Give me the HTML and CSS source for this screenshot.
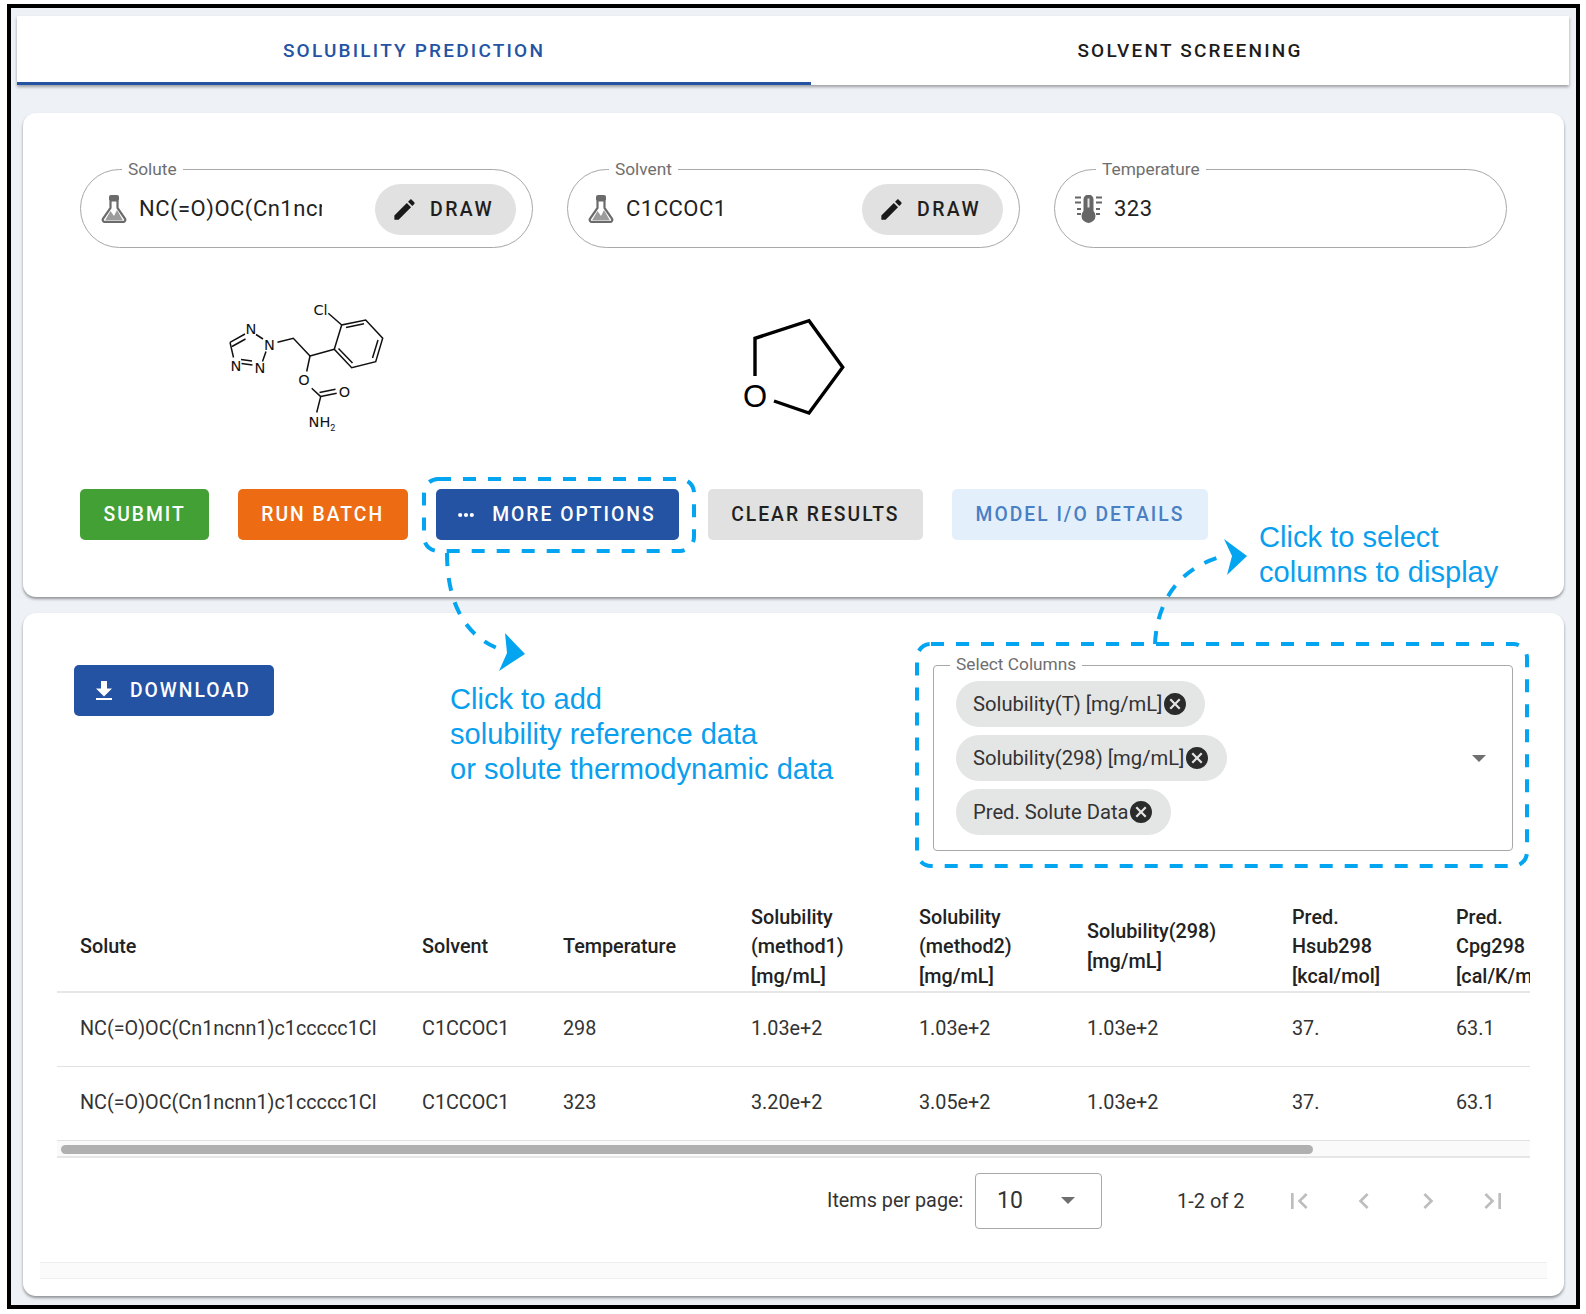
FILE: index.html
```html
<!DOCTYPE html>
<html lang="en">
<head>
    <meta charset="UTF-8">
    <meta name="viewport" content="width=device-width, initial-scale=1.0">
    <title>Solubility Prediction</title>
    <link rel="stylesheet" href="styles.css">
</head>
<body>
    <div class="frame">
        <div class="tabs">
            <div class="tab tab-active">SOLUBILITY PREDICTION</div>
            <div class="tab tab-rest">SOLVENT SCREENING</div>
        </div>

        <div class="card card-input">
            <div class="field-row">
                <div class="field">
                    <span class="field-label">Solute</span>
                    <svg class="field-icon" viewBox="0 0 26 28"><path class="flask-liquid" d="M4 25.500 9.500 16l3.500 5 3-6 6 10.500z"/><path class="flask-glass" d="M9.500 6v7L1.800 24a2.300 2.300 0 0 0 1.900 3h18.600a2.300 2.300 0 0 0 1.900-3L16.500 13V6"/><rect class="flask-cap" x="8" y="0" width="10" height="6.500" rx="2"/></svg>
                    <span class="field-value">NC(=O)OC(Cn1ncn</span>
                    <button class="btn-draw"><svg class="draw-icon" viewBox="0 0 24 24"><path d="M3 17.250V21h3.750L17.810 9.940l-3.750-3.750L3 17.250zM20.710 7.040c.39-.39.39-1.020 0-1.410l-2.340-2.340c-.39-.39-1.020-.39-1.410 0l-1.830 1.830 3.750 3.750 1.830-1.830z"/></svg>DRAW</button>
                </div>
                <div class="field">
                    <span class="field-label">Solvent</span>
                    <svg class="field-icon" viewBox="0 0 26 28"><path class="flask-liquid" d="M4 25.500 9.500 16l3.500 5 3-6 6 10.500z"/><path class="flask-glass" d="M9.500 6v7L1.800 24a2.300 2.300 0 0 0 1.900 3h18.600a2.300 2.300 0 0 0 1.900-3L16.500 13V6"/><rect class="flask-cap" x="8" y="0" width="10" height="6.500" rx="2"/></svg>
                    <span class="field-value">C1CCOC1</span>
                    <button class="btn-draw"><svg class="draw-icon" viewBox="0 0 24 24"><path d="M3 17.250V21h3.750L17.810 9.940l-3.750-3.750L3 17.250zM20.710 7.040c.39-.39.39-1.020 0-1.410l-2.340-2.340c-.39-.39-1.020-.39-1.410 0l-1.830 1.830 3.750 3.750 1.830-1.830z"/></svg>DRAW</button>
                </div>
                <div class="field">
                    <span class="field-label">Temperature</span>
                    <svg class="temp-icon" viewBox="0 0 27 28">
                        <path d="M8.500 16V4.500a5 5 0 0 1 10 0V16a7 7 0 1 1-10 0z"/>
                        <rect class="temp-slit" x="12.500" y="3.500" width="2" height="9"/>
                        <path d="M0 1.500h6v2H0zM0 6.500h6v2H0zM2 13h4v2H2zM2 18h4v2H2zM21 1.500h6v2h-6zM21 6.500h6v2h-6zM21 13h4v2h-4zM21 18h4v2h-4z"/>
                    </svg>
                    <span class="field-value">323</span>
                </div>
            </div>

            <div class="molecules">
                <svg class="mol-solute" viewBox="0 0 260 170">
                    <g class="mol-bonds">
                        <path d="M30 62.300 45 54M32 66.500 45.500 59M56 54.500l7 4.500M66 71.500 62.500 81.500M52.500 85l-11-1.500M52 81l-11-1.500M33.500 77.500 30 62.300"/>
                        <path d="M77.500 62.300 93.300 58.300 110 76M110 76l24.300-6.700M110 76 106.700 91.500M111.700 108.300l9 8.300M120.700 116.600l16-3.300M119.500 112.500l16-3.300M120.700 116.600 116.700 132.500"/>
                        <path d="M134.300 69.300 141.700 45 165.700 40 182.700 58.300 175.700 81.700 151.700 87.700zM146 47.500l18-3.700M178 60l-5.500 18M152.500 83l-14-14.500M141.700 45 128.300 33.300"/>
                    </g>
                    <text class="mol-atom" x="51" y="54">N</text>
                    <text class="mol-atom" x="69.500" y="69.500">N</text>
                    <text class="mol-atom" x="60" y="92.500">N</text>
                    <text class="mol-atom" x="36" y="90.500">N</text>
                    <text class="mol-atom" x="104" y="105">O</text>
                    <text class="mol-atom" x="144.500" y="117">O</text>
                    <text class="mol-atom" x="120.500" y="34.500">Cl</text>
                    <text class="mol-atom" x="122" y="146.500">NH<tspan class="mol-sub" dy="4">2</tspan></text>
                </svg>
                <svg class="mol-solvent" viewBox="0 0 200 150">
                    <path d="M55 86V48.300L109 30.700 142.700 77.300 109 123 74 111"/>
                    <text x="55" y="117">O</text>
                </svg>
            </div>

            <div class="btn-row">
                <button class="btn btn-green">SUBMIT</button>
                <button class="btn btn-orange">RUN BATCH</button>
                <button class="btn btn-blue btn-more"><svg class="more-icon" viewBox="0 0 24 24"><circle cx="5" cy="12" r="2.500"/><circle cx="12" cy="12" r="2.500"/><circle cx="19" cy="12" r="2.500"/></svg>MORE OPTIONS</button>
                <button class="btn btn-grey">CLEAR RESULTS</button>
                <button class="btn btn-light">MODEL I/O DETAILS</button>
            </div>
        </div>

        <div class="card card-results">
            <div class="results">
                <div class="results-top">
                    <button class="btn btn-blue btn-download"><svg class="download-icon" viewBox="0 0 16 19"><path d="M16 7.500h-5V0H5v7.500H0l8 8zM0 17h16v2H0z"/></svg>DOWNLOAD</button>
                    <div class="select-box">
                        <span class="field-label select-label">Select Columns</span>
                        <div class="chips">
                            <div class="chip">Solubility(T) [mg/mL]<svg class="chip-close" viewBox="2 2 20 20"><path d="M12 2C6.470 2 2 6.470 2 12s4.470 10 10 10 10-4.470 10-10S17.530 2 12 2zm5 13.590L15.590 17 12 13.410 8.410 17 7 15.590 10.590 12 7 8.410 8.410 7 12 10.590 15.590 7 17 8.410 13.410 12 17 15.590z"/></svg></div>
                            <div class="chip">Solubility(298) [mg/mL]<svg class="chip-close" viewBox="2 2 20 20"><path d="M12 2C6.470 2 2 6.470 2 12s4.470 10 10 10 10-4.470 10-10S17.530 2 12 2zm5 13.590L15.590 17 12 13.410 8.410 17 7 15.590 10.590 12 7 8.410 8.410 7 12 10.590 15.590 7 17 8.410 13.410 12 17 15.590z"/></svg></div>
                            <div class="chip">Pred. Solute Data<svg class="chip-close" viewBox="2 2 20 20"><path d="M12 2C6.470 2 2 6.470 2 12s4.470 10 10 10 10-4.470 10-10S17.530 2 12 2zm5 13.590L15.590 17 12 13.410 8.410 17 7 15.590 10.590 12 7 8.410 8.410 7 12 10.590 15.590 7 17 8.410 13.410 12 17 15.590z"/></svg></div>
                        </div>
                        <span class="caret caret-select"></span>
                    </div>
                </div>

                <div class="table-wrap">
                    <table class="data-table">
                        <colgroup>
                            <col class="col-solute">
                            <col class="col-solvent">
                            <col class="col-temp">
                            <col class="col-sol">
                            <col class="col-sol">
                            <col class="col-sol298">
                            <col class="col-hsub">
                            <col class="col-cpg">
                        </colgroup>
                        <thead>
                            <tr>
                                <th>Solute</th>
                                <th>Solvent</th>
                                <th>Temperature</th>
                                <th>Solubility<br>(method1)<br>[mg/mL]</th>
                                <th>Solubility<br>(method2)<br>[mg/mL]</th>
                                <th>Solubility(298)<br>[mg/mL]</th>
                                <th>Pred.<br>Hsub298<br>[kcal/mol]</th>
                                <th>Pred.<br>Cpg298<br>[cal/K/mol]</th>
                            </tr>
                        </thead>
                        <tbody>
                            <tr>
                                <td>NC(=O)OC(Cn1ncnn1)c1ccccc1Cl</td>
                                <td>C1CCOC1</td>
                                <td>298</td>
                                <td>1.03e+2</td>
                                <td>1.03e+2</td>
                                <td>1.03e+2</td>
                                <td>37.</td>
                                <td>63.1</td>
                            </tr>
                            <tr>
                                <td>NC(=O)OC(Cn1ncnn1)c1ccccc1Cl</td>
                                <td>C1CCOC1</td>
                                <td>323</td>
                                <td>3.20e+2</td>
                                <td>3.05e+2</td>
                                <td>1.03e+2</td>
                                <td>37.</td>
                                <td>63.1</td>
                            </tr>
                        </tbody>
                    </table>
                </div>
                <div class="scroll-track"><div class="scroll-thumb"></div></div>

                <div class="pager">
                    <span class="pager-label">Items per page:</span>
                    <div class="pager-select">10<span class="caret"></span></div>
                    <span class="pager-range">1-2 of 2</span>
                    <svg class="pager-icon" viewBox="0 0 24 24"><path d="M18.410 16.590 13.820 12l4.590-4.590L17 6l-6 6 6 6zM6 6h2v12H6z"/></svg>
                    <svg class="pager-icon" viewBox="0 0 24 24"><path d="M15.410 7.410 14 6l-6 6 6 6 1.410-1.410L10.830 12z"/></svg>
                    <svg class="pager-icon" viewBox="0 0 24 24"><path d="M10 6 8.590 7.410 13.170 12l-4.580 4.590L10 18l6-6z"/></svg>
                    <svg class="pager-icon" viewBox="0 0 24 24"><path d="M5.590 7.410 10.180 12l-4.590 4.590L7 18l6-6-6-6zM16 6h2v12h-2z"/></svg>
                </div>
            </div>
            <div class="bottom-bar"></div>
        </div>
    </div>

    <!-- callouts drawn over the page -->
    <svg class="callouts" viewBox="0 0 1586 1314">
        <rect x="424" y="479" width="270" height="72" rx="14"/>
        <path d="M447 553C447 600 463 634 497 648"/>
        <path class="callout-head" d="M505 633 525 654 499 671 507 653z"/>
        <rect x="917" y="644" width="610" height="222" rx="14"/>
        <path d="M1155 644C1157 600 1180 567 1224 556"/>
        <path class="callout-head" d="M1224 539 1247 556 1227 575 1232 556z"/>
    </svg>
    <div class="note note-add">Click to add<br>solubility reference data<br>or solute thermodynamic data</div>
    <div class="note note-select">Click to select<br>columns to display</div>
</body>
</html>
```

FILE: styles.css
```css
* {
    box-sizing: border-box;
    margin: 0;
    padding: 0;
    font-family: 'Roboto', 'Liberation Sans', sans-serif;
}

body {
    background-color: #fff;
    color: #212121;
    position: relative;
    width: 1586px;
    height: 1314px;
    overflow: hidden;
}

.frame {
    margin: 4px 6px 5px 7px;
    border: 4px solid #000;
    padding: 8px 7px 9px 6px;
    background-color: #eef2f7;
}

/* tabs */
.tabs {
    display: flex;
    height: 69px;
    background-color: #fff;
    box-shadow: 0 2px 3px rgba(0, 0, 0, 0.35);
}

.tab {
    display: flex;
    align-items: center;
    justify-content: center;
    font-size: 19px;
    font-weight: 500;
    letter-spacing: 2.2px;
}

.tab-active {
    width: 794px;
    padding-top: 2px;
    color: #2453a4;
    border-bottom: 3px solid #2453a4;
}

.tab-rest {
    flex: 1;
    padding-bottom: 1px;
    color: #1c1c1c;
}

/* cards */
.card {
    margin: 0 5px 0 6px;
    background-color: #fff;
    border-radius: 13px;
    box-shadow: 0 2px 3px rgba(0, 0, 0, 0.4);
}

.card-input {
    margin-top: 28px;
    padding: 56px 0 57px 57px;
}

.card-results {
    margin-top: 16px;
    padding: 51px 17px 17px;
}

/* input fields */
.field-row {
    display: flex;
    gap: 34px;
}

.field {
    position: relative;
    display: flex;
    align-items: center;
    width: 453px;
    height: 79px;
    padding: 2px 16px 0 20px;
    border: 1px solid #a8a8a8;
    border-radius: 40px;
}

.field-label {
    position: absolute;
    top: -11px;
    left: 41px;
    padding: 0 6px;
    background-color: #fff;
    color: #6f6f6f;
    font-size: 17.300px;
    line-height: 20px;
}

.field-icon {
    width: 26px;
    height: 28px;
    margin-bottom: 2px;
    flex-shrink: 0;
}

.flask-liquid {
    fill: #9c9c9c;
}

.flask-glass {
    fill: none;
    stroke: #6b6b6b;
    stroke-width: 2.200;
}

.flask-cap {
    fill: #6b6b6b;
}

.temp-icon {
    width: 27px;
    height: 28px;
    margin: 0 12px 2px 0;
    fill: #666;
    flex-shrink: 0;
}

.temp-slit {
    fill: #e4e4e4;
}

.field-value {
    width: 183px;
    margin: 0 0 2px 12px;
    overflow: hidden;
    white-space: nowrap;
    font-size: 22px;
    letter-spacing: 0.5px;
    color: #222;
}

.temp-icon + .field-value {
    margin-left: 0;
}

.btn-draw {
    display: flex;
    align-items: center;
    margin-left: auto;
    width: 141px;
    height: 51px;
    padding-left: 16px;
    border: none;
    border-radius: 26px;
    background-color: #e0e1e0;
    color: #1f1f1f;
    font-size: 19.500px;
    font-weight: 500;
    letter-spacing: 2.400px;
}

.draw-icon {
    width: 27px;
    height: 27px;
    margin-right: 12px;
    fill: #1a1a1a;
}

/* molecule drawings */
.molecules {
    display: flex;
    align-items: flex-start;
    margin-top: 32px;
    height: 170px;
}

.mol-solute {
    width: 260px;
    height: 170px;
    margin-left: 120px;
}

.mol-bonds {
    fill: none;
    stroke: #111;
    stroke-width: 1.500;
}

.mol-atom {
    font-family: 'DejaVu Sans', sans-serif;
    font-size: 14.500px;
    text-anchor: middle;
    fill: #111;
}

.mol-sub {
    font-size: 9px;
}

.mol-solvent {
    width: 200px;
    height: 150px;
    margin: 10px 0 0 240px;
}

.mol-solvent path {
    fill: none;
    stroke: #000;
    stroke-width: 3.400;
}

.mol-solvent text {
    font-family: 'Liberation Sans', sans-serif;
    font-size: 31px;
    text-anchor: middle;
    fill: #000;
}

/* buttons */
.btn-row {
    display: flex;
    gap: 28.600px;
    margin-top: 39px;
}

.btn {
    display: flex;
    align-items: center;
    height: 51px;
    padding: 0 23.500px;
    border: none;
    border-radius: 5px;
    font-size: 19.300px;
    font-weight: 500;
    letter-spacing: 2px;
    white-space: nowrap;
}

.btn-more {
    padding-left: 20px;
}

.btn-green {
    background-color: #43a035;
    color: #fff;
}

.btn-orange {
    background-color: #ed6c13;
    color: #fff;
}

.btn-blue {
    background-color: #2453a4;
    color: #fff;
}

.btn-grey {
    background-color: #e0e1e0;
    color: #1f1f1f;
}

.btn-light {
    padding: 0 24px;
    background-color: #e3f0fb;
    color: #4a7fc4;
}

.more-icon {
    width: 20px;
    height: 20px;
    margin-right: 16px;
    fill: #fff;
}

.download-icon {
    width: 16px;
    height: 19px;
    margin-right: 18px;
    fill: #fff;
}

/* results */
.results {
    padding: 0 17px;
}

.results-top {
    display: flex;
    justify-content: space-between;
    align-items: flex-start;
    padding: 0 17px;
    height: 187px;
}

.btn-download {
    width: 200px;
    margin-top: 1px;
    padding: 0 22px;
}

.select-box {
    position: relative;
    width: 580px;
    height: 186px;
    margin-top: 1px;
    padding: 15px 22px;
    border: 1px solid #a8a8a8;
    border-radius: 4px;
}

.select-label {
    left: 16px;
    top: -12px;
}

.chips {
    display: flex;
    flex-direction: column;
    align-items: flex-start;
    gap: 8px;
}

.chip {
    display: flex;
    align-items: center;
    height: 46px;
    padding: 0 19px 0 17px;
    border-radius: 23px;
    background-color: #e4e5e5;
    color: #333;
    font-size: 20.200px;
    white-space: nowrap;
}

.chip-close {
    width: 22px;
    height: 22px;
    margin-left: 2px;
    fill: #2b2b2b;
}

.caret {
    display: inline-block;
    width: 0;
    height: 0;
    border-left: 7px solid transparent;
    border-right: 7px solid transparent;
    border-top: 7px solid #6f6f6f;
}

.caret-select {
    position: absolute;
    right: 26px;
    top: 89px;
}

/* table */
.table-wrap {
    margin-top: 50px;
    overflow: hidden;
}

.data-table {
    width: 1576px;
    table-layout: fixed;
    border-collapse: collapse;
}

.col-solute { width: 342px; }
.col-solvent { width: 141px; }
.col-temp { width: 188px; }
.col-sol { width: 168px; }
.col-sol298 { width: 205px; }
.col-hsub { width: 164px; }
.col-cpg { width: 200px; }

.data-table th {
    height: 91px;
    padding: 1.500px 0 0 23px;
    border-bottom: 2px solid #e6e6e6;
    text-align: left;
    font-size: 19.800px;
    font-weight: 500;
    line-height: 29.500px;
    color: #222;
    white-space: nowrap;
}

.data-table td {
    height: 74px;
    padding: 0 0 2px 23px;
    border-bottom: 1px solid #e2e2e2;
    font-size: 19.800px;
    color: #333;
    white-space: nowrap;
}

.scroll-track {
    height: 17px;
    padding: 4px 0 0 4px;
    background-color: #fafafa;
    border-bottom: 2px solid #e6e6e6;
}

.scroll-thumb {
    width: 1252px;
    height: 9px;
    border-radius: 5px;
    background-color: #b0b0b0;
}

/* pagination */
.pager {
    display: flex;
    align-items: center;
    margin-top: 15px;
    height: 56px;
    padding-left: 770px;
}

.pager-label {
    width: 148px;
    flex-shrink: 0;
    font-size: 19.800px;
    color: #333;
}

.pager-select {
    display: flex;
    align-items: center;
    justify-content: space-between;
    width: 127px;
    height: 56px;
    flex-shrink: 0;
    padding: 0 26px 0 21px;
    border: 1px solid #a8a8a8;
    border-radius: 4px;
    font-size: 23px;
    color: #333;
}

.pager-range {
    width: 106px;
    flex-shrink: 0;
    margin-left: 75px;
    font-size: 20px;
    color: #333;
}

.pager-icon {
    width: 32px;
    height: 32px;
    margin-right: 32.500px;
    fill: #bdbdbd;
    flex-shrink: 0;
}

.pager-icon:last-child {
    margin-right: 0;
}

.bottom-bar {
    height: 17px;
    margin-top: 33px;
    background-color: #fbfbfc;
    border-top: 1px solid #eeeeee;
    border-bottom: 1px solid #eeeeee;
}

/* annotation layer */
.callouts {
    position: absolute;
    top: 0;
    left: 0;
    width: 1586px;
    height: 1314px;
    fill: none;
    stroke: #03a5f0;
    stroke-width: 4;
    stroke-dasharray: 13 12;
    pointer-events: none;
}

.callouts .callout-head {
    fill: #03a5f0;
    stroke: none;
}

.note {
    position: absolute;
    font-family: 'Liberation Sans', sans-serif;
    font-size: 29.100px;
    line-height: 35px;
    color: #0a9fee;
    white-space: nowrap;
}

.note-add {
    left: 450px;
    top: 682px;
}

.note-select {
    left: 1259px;
    top: 520px;
}
```
